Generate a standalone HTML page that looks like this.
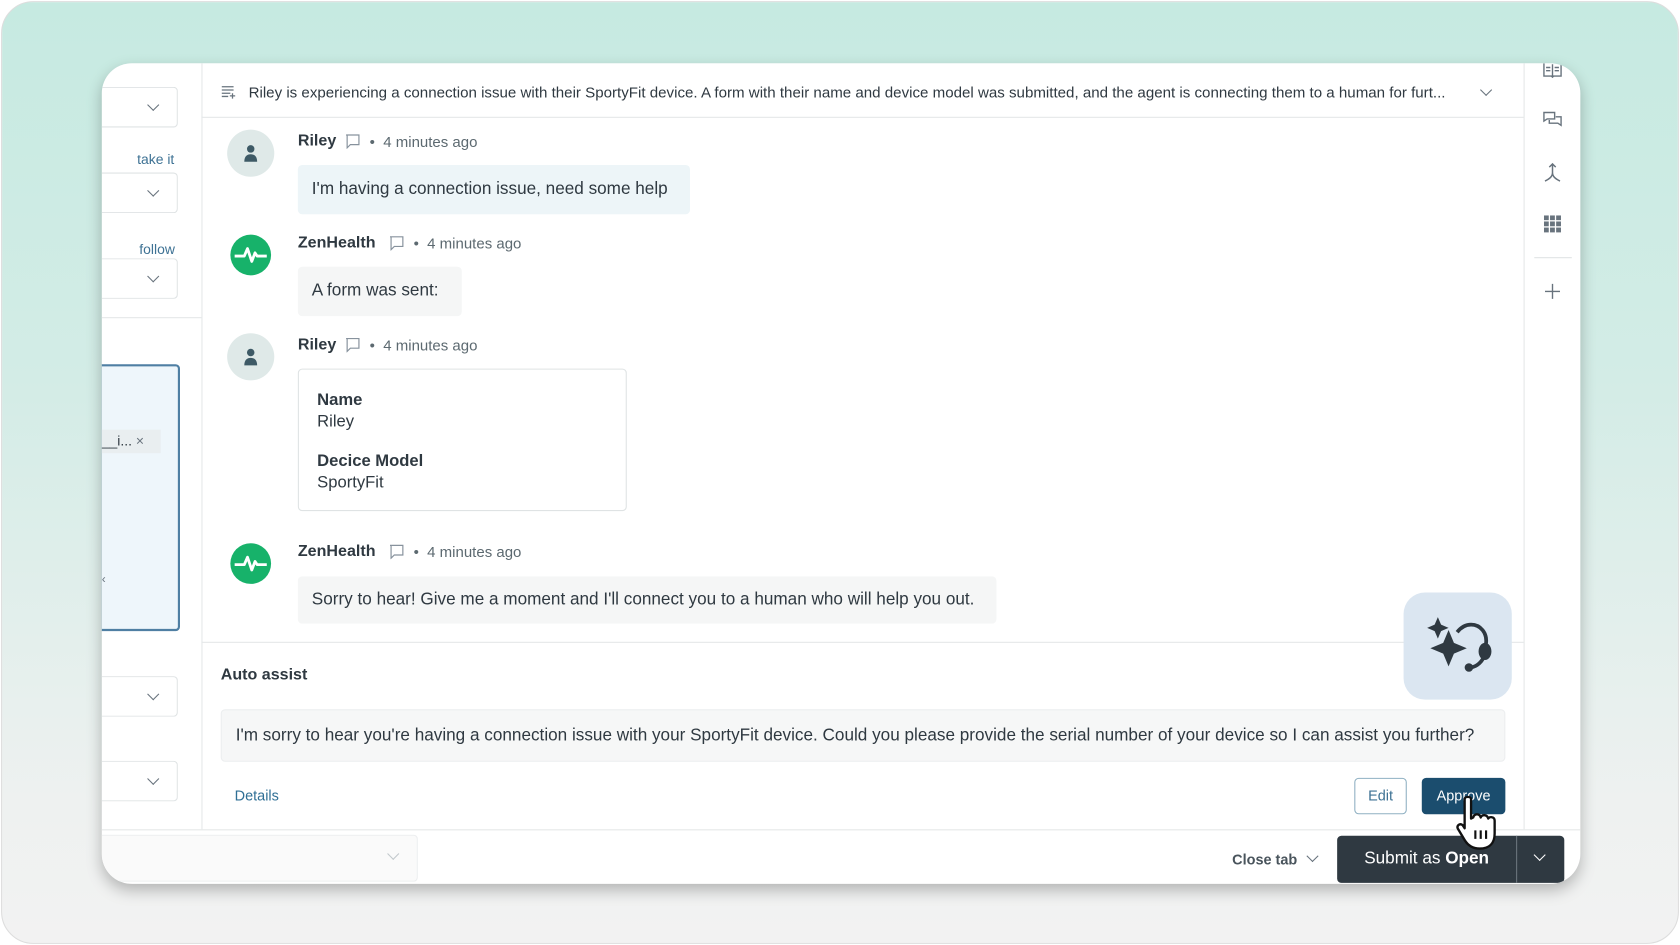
<!DOCTYPE html>
<html><head><meta charset="utf-8"><style>
*{box-sizing:border-box;margin:0;padding:0}
html,body{width:1680px;height:945px;overflow:hidden;background:#fff}
#w{position:absolute;left:0;top:0;width:1568px;height:882px;transform:scale(1.07143);transform-origin:0 0;font-family:"Liberation Sans",sans-serif;color:#2f3941}
.frame{position:absolute;left:1px;top:1px;width:1566px;height:880px;border-radius:30px;border:1px solid #ddd;background:linear-gradient(180deg,#c6eae1 0%,#d3ece6 40%,#eef1f0 85%,#f2f2f2 100%);overflow:hidden}
.card{position:absolute;left:93px;top:57px;width:1380px;height:766px;background:#fff;border-radius:28px;overflow:hidden;box-shadow:0 6px 14px rgba(0,0,0,.25)}
.a{position:absolute}
.dd{position:absolute;left:0;width:71px;height:38px;border:1px solid #dfe3e4;border-left:none;border-radius:0 4px 4px 0}
.chev{position:absolute;width:8px;height:8px;border-right:1.5px solid #68737d;border-bottom:1.5px solid #68737d;transform:rotate(45deg)}
.av{position:absolute;width:44px;height:44px;border-radius:50%;background:#dfe9e8}
.zh{position:absolute;width:38px;height:38px;border-radius:50%;background:#17b26a}
.nm{position:absolute;font-size:15px;font-weight:bold;color:#2f3941;white-space:nowrap}
.ts{position:absolute;font-size:14px;color:#5c6970;white-space:nowrap}
.bub{position:absolute;font-size:16px;padding:0 13px;line-height:46px;border-radius:4px;white-space:nowrap}
</style></head><body><div id="w">
<div class="frame">
<div class="card">
 <div class="a" style="left:93px;top:0;width:1px;height:715px;background:#e4e7e8"></div>
 <div class="dd" style="top:22px"></div><div class="chev" style="left:44px;top:35px"></div>
 <div class="a" style="left:33px;top:82px;font-size:13px;color:#3e7294">take it</div>
 <div class="dd" style="top:102px"></div><div class="chev" style="left:44px;top:115px"></div>
 <div class="a" style="left:35px;top:166px;font-size:13px;color:#3e7294">follow</div>
 <div class="dd" style="top:182px"></div><div class="chev" style="left:44px;top:195px"></div>
 <div class="a" style="left:0;top:237px;width:93px;height:1px;background:#e4e7e8"></div>
 <div class="a" style="left:-2px;top:281px;width:75px;height:249px;border:2px solid #4f7fa3;border-radius:0 4px 4px 0;background:#eef6fb"></div>
 <div class="a" style="left:0;top:342px;width:55px;height:22px;background:#e9eef0;font-size:13px;line-height:22px;color:#2f3941">__i... <span style="color:#68737d">×</span></div>
 <div class="a" style="left:0;top:476px;font-size:11px;color:#68737d">‹</div>
 <div class="dd" style="top:572px"></div><div class="chev" style="left:44px;top:585px"></div>
 <div class="dd" style="top:651px"></div><div class="chev" style="left:44px;top:664px"></div>
 <div class="a" style="left:93px;top:50px;width:1234px;height:1px;background:#e4e7e8"></div>
 <svg class="a" style="left:111px;top:20px" width="14" height="14" viewBox="0 0 14 14" fill="none" stroke="#68737d" stroke-width="1.2"><path d="M1 2h11M1 5h11M1 8h8M1 11h6M11 8v5M8.5 10.5h5"/></svg>
 <div class="a" style="left:137px;top:19px;font-size:14.1px;color:#2f3941;white-space:nowrap">Riley is experiencing a connection issue with their SportyFit device. A form with their name and device model was submitted, and the agent is connecting them to a human for furt...</div>
 <div class="chev" style="left:1288px;top:21px"></div>
 <div class="a" style="left:1327px;top:0;width:1px;height:715px;background:#e4e7e8"></div>
 <svg class="a" style="left:1345px;top:0" width="18" height="14" viewBox="0 0 18 14" fill="none" stroke="#68737d" stroke-width="1.3"><path d="M1 0v12h7l1 1 1-1h7V0M9 1v11M3 4h4M3 7h4M11 4h4M11 7h4"/></svg>
 <svg class="a" style="left:1344px;top:44px" width="20" height="18" viewBox="0 0 20 18" fill="none" stroke="#68737d" stroke-width="1.3"><path d="M2 2h10v6H5l-3 2zM7 9v3h8l3 2V6h-5"/></svg>
 <svg class="a" style="left:1345px;top:91px" width="18" height="20" viewBox="0 0 18 20" fill="none" stroke="#68737d" stroke-width="1.4"><path d="M9 3v8M9 11c0 4-3 6-7 8M9 11c0 4 3 6 7 8M6 6l3-3 3 3"/></svg>
 <svg class="a" style="left:1346px;top:142px" width="16" height="16" viewBox="0 0 16 16" fill="#68737d"><rect x="0" y="0" width="4.5" height="4.5"/><rect x="5.7" y="0" width="4.5" height="4.5"/><rect x="11.4" y="0" width="4.5" height="4.5"/><rect x="0" y="5.7" width="4.5" height="4.5"/><rect x="5.7" y="5.7" width="4.5" height="4.5"/><rect x="11.4" y="5.7" width="4.5" height="4.5"/><rect x="0" y="11.4" width="4.5" height="4.5"/><rect x="5.7" y="11.4" width="4.5" height="4.5"/><rect x="11.4" y="11.4" width="4.5" height="4.5"/></svg>
 <div class="a" style="left:1337px;top:181px;width:35px;height:1px;background:#dfe3e4"></div>
 <svg class="a" style="left:1346px;top:205px" width="16" height="16" viewBox="0 0 16 16" stroke="#68737d" stroke-width="1.3"><path d="M8 1v14M1 8h14"/></svg>

 <div class="av" style="left:117px;top:62px"></div>
 <svg class="a" style="left:131px;top:75px" width="16" height="18" viewBox="0 0 16 18" fill="#3e5a66"><circle cx="8" cy="5" r="3.5"/><path d="M2 17c0-5 2.5-7 6-7s6 2 6 7z"/></svg>
 <div class="nm" style="left:183px;top:64px">Riley</div>
 <svg class="a" style="left:227px;top:66px" width="14" height="14" viewBox="0 0 14 14" fill="none" stroke="#87929d" stroke-width="1.1"><path d="M1 1h12v9H5l-3 3V1z"/></svg>
 <div class="ts" style="left:250px;top:65px">•&nbsp; 4 minutes ago</div>
 <div class="bub" style="left:183px;top:95px;width:366px;background:#edf5f8">I'm having a connection issue, need some help</div>

 <div class="zh" style="left:120px;top:160px"></div>
 <svg class="a" style="left:120px;top:160px" width="38" height="38" viewBox="0 0 38 38" fill="none" stroke="#fff" stroke-width="2.6" stroke-linejoin="round"><path d="M4 20h9l3-7 4 12 3-8 2 3h9"/></svg>
 <div class="nm" style="left:183px;top:159px">ZenHealth</div>
 <svg class="a" style="left:268px;top:161px" width="14" height="14" viewBox="0 0 14 14" fill="none" stroke="#87929d" stroke-width="1.1"><path d="M1 1h12v9H5l-3 3V1z"/></svg>
 <div class="ts" style="left:291px;top:160px">•&nbsp; 4 minutes ago</div>
 <div class="bub" style="left:183px;top:190px;width:153px;background:#f5f6f6">A form was sent:</div>

 <div class="av" style="left:117px;top:252px"></div>
 <svg class="a" style="left:131px;top:265px" width="16" height="18" viewBox="0 0 16 18" fill="#3e5a66"><circle cx="8" cy="5" r="3.5"/><path d="M2 17c0-5 2.5-7 6-7s6 2 6 7z"/></svg>
 <div class="nm" style="left:183px;top:254px">Riley</div>
 <svg class="a" style="left:227px;top:256px" width="14" height="14" viewBox="0 0 14 14" fill="none" stroke="#87929d" stroke-width="1.1"><path d="M1 1h12v9H5l-3 3V1z"/></svg>
 <div class="ts" style="left:250px;top:255px">•&nbsp; 4 minutes ago</div>
 <div class="a" style="left:183px;top:285px;width:307px;height:133px;border:1px solid #dfe3e4;border-radius:4px;font-size:15.5px;padding:19px 0 0 17px;line-height:20px">
  <b>Name</b><br>Riley<br><div style="height:17px"></div><b>Decice Model</b><br>SportyFit</div>

 <div class="zh" style="left:120px;top:448px"></div>
 <svg class="a" style="left:120px;top:448px" width="38" height="38" viewBox="0 0 38 38" fill="none" stroke="#fff" stroke-width="2.6" stroke-linejoin="round"><path d="M4 20h9l3-7 4 12 3-8 2 3h9"/></svg>
 <div class="nm" style="left:183px;top:447px">ZenHealth</div>
 <svg class="a" style="left:268px;top:449px" width="14" height="14" viewBox="0 0 14 14" fill="none" stroke="#87929d" stroke-width="1.1"><path d="M1 1h12v9H5l-3 3V1z"/></svg>
 <div class="ts" style="left:291px;top:448px">•&nbsp; 4 minutes ago</div>
 <div class="bub" style="left:183px;top:479px;width:652px;height:44px;line-height:44px;background:#f5f6f6">Sorry to hear! Give me a moment and I'll connect you to a human who will help you out.</div>

 <div class="a" style="left:93px;top:540px;width:1234px;height:1px;background:#e4e7e8"></div>
 <div class="a" style="left:111px;top:562px;font-size:15px;font-weight:bold">Auto assist</div>
 <div class="a" style="left:111px;top:603px;width:1199px;height:49px;background:#f6f7f7;border:1px solid #eceeef;border-radius:4px;font-size:16px;line-height:47px;padding-left:13px;white-space:nowrap">I'm sorry to hear you're having a connection issue with your SportyFit device. Could you please provide the serial number of your device so I can assist you further?</div>
 <div class="a" style="left:124px;top:676px;font-size:13.5px;color:#2f6f95">Details</div>
 <div class="a" style="left:1169px;top:667px;width:49px;height:34px;border:1px solid #8fb0c2;border-radius:4px;font-size:13.5px;line-height:32px;text-align:center;color:#3e7294">Edit</div>
 <div class="a" style="left:1232px;top:667px;width:78px;height:34px;background:#1b4d6e;border-radius:4px;font-size:13.5px;line-height:34px;text-align:center;color:#fff">Approve</div>
 <div class="a" style="left:1215px;top:494px;width:101px;height:100px;background:#dbe6f1;border-radius:20px"></div>
 <svg class="a" style="left:1215px;top:494px" width="101" height="100" viewBox="0 0 101 100"><path d="M32 23l3 7 7 3-7 3-3 7-3-7-7-3 7-3z" fill="#2f3941"/><path d="M42 35l5 12 12 5-12 5-5 12-5-12-12-5 12-5z" fill="#2f3941"/><path d="M50 37c4-5 9-7 13-7 9 0 15 8 14 17l-1 10c-2 8-8 12-13 13" fill="none" stroke="#2f3941" stroke-width="3.5"/><ellipse cx="76" cy="55" rx="6" ry="8" fill="#2f3941"/><circle cx="61" cy="70" r="4" fill="#2f3941"/></svg>

 <div class="a" style="left:0;top:715px;width:1380px;height:1px;background:#e4e7e8"></div>
 <div class="a" style="left:0;top:720px;width:295px;height:44px;border:1px solid #eceeef;border-left:none;border-radius:0 4px 4px 0;background:#fafafa"></div>
 <div class="chev" style="left:268px;top:734px;border-color:#c2c8cc"></div>
 <div class="a" style="left:1055px;top:736px;font-size:13.5px;font-weight:bold;color:#49545c">Close tab</div>
 <div class="chev" style="left:1126px;top:736px"></div>
 <div class="a" style="left:1153px;top:721px;width:212px;height:44px;background:#2f3941;border-radius:4px"></div>
 <div class="a" style="left:1153px;top:721px;width:167px;height:44px;color:#fff;font-size:16px;line-height:44px;text-align:center">Submit as <b>Open</b></div>
 <div class="a" style="left:1320px;top:721px;width:1px;height:44px;background:#6b757d"></div>
 <div class="chev" style="left:1338px;top:735px;border-color:#fff"></div>
 <svg class="a" style="left:1262px;top:683px" width="50" height="52" viewBox="0 0 50 52"><path d="M10 4c0-3 6-3 6 0v18l2-1c1-4 6-4 7 0 1-3 6-3 7 1 1-2 6-2 6 2v12c0 8-4 14-14 14-7 0-11-3-14-8L4 32c-2-3 1-6 4-4l2 3z" fill="#fff" stroke="#111" stroke-width="2.2" stroke-linejoin="round"/><path d="M20 33v8M25 33v8M30 33v8" stroke="#111" stroke-width="2"/></svg>
</div>
</div>
</div></body></html>
